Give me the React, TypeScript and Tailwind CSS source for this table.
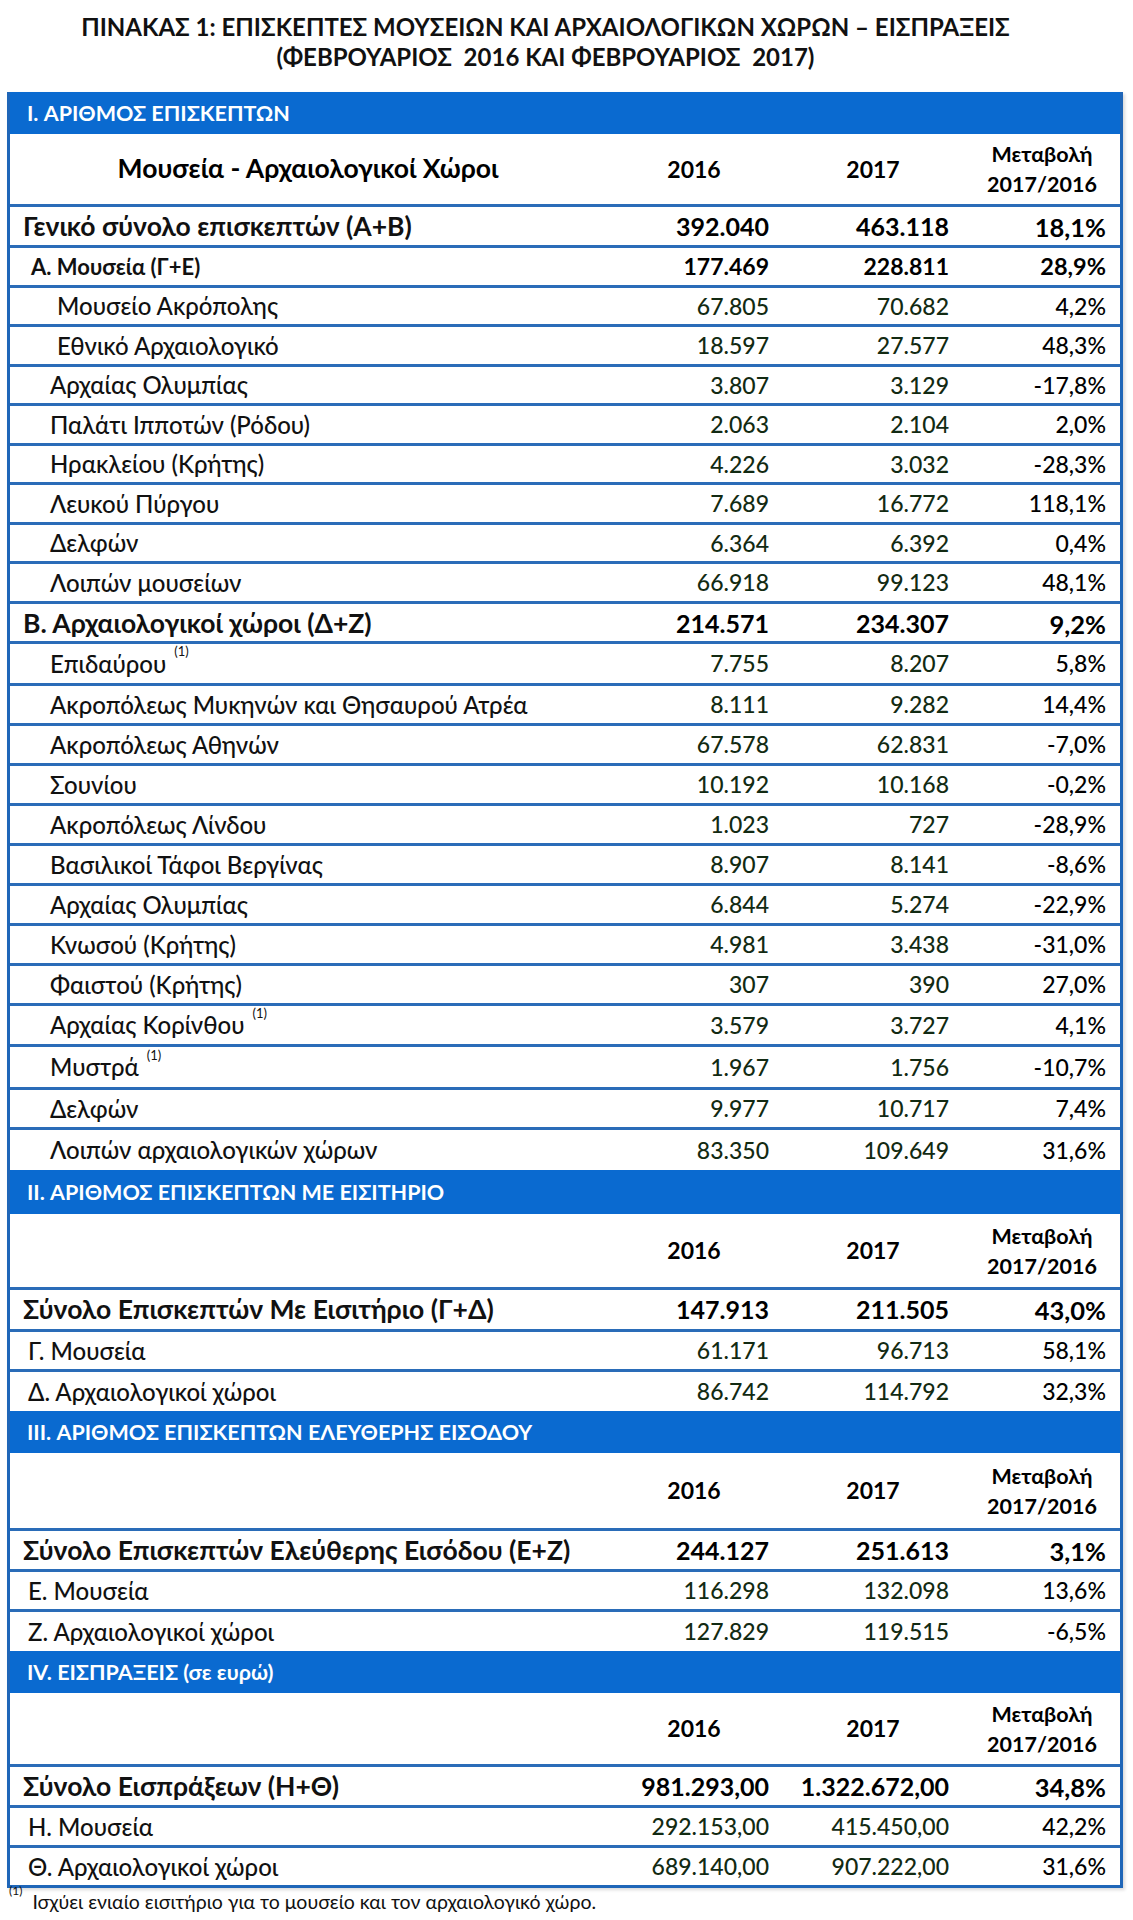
type Kind = "total" | "sub" | "item";

interface RowProps {
  label: string;
  v1: string;
  v2: string;
  pct: string;
  kind?: Kind;
  indent?: string;
  note?: boolean;
  h?: string;
}

const GRID = "grid grid-cols-[596px_176px_182px_156px]";

// one data row of the table
function Row({ label, v1, v2, pct, kind = "item", indent = "pl-[40px]", note, h = "h-[40px]" }: RowProps) {
  let labelSize = "text-[24px] font-medium";
  let numSize = "text-[23px] font-medium text-[#122a12]";
  let pctSize = "text-[23px] font-medium";
  if (kind === "total") {
    labelSize = "text-[26.5px] font-bold";
    numSize = "text-[25px] font-bold text-black";
    pctSize = "text-[25.5px] font-bold";
  } else if (kind === "sub") {
    labelSize = "text-[22px] font-bold";
    numSize = "text-[23px] font-bold text-black";
    pctSize = "text-[23.5px] font-bold";
  }
  return (
    <div className={`${GRID} ${h} items-center border-t-[3px] border-[#2a6cb8]`}>
      <div className={`${indent} ${labelSize} text-[#111] whitespace-nowrap`}>
        {label}
        {note && <sup className="ml-2 text-[13px] font-normal align-[10px]">(1)</sup>}
      </div>
      <div className={`text-right pr-[13px] ${numSize}`}>{v1}</div>
      <div className={`text-right pr-[15px] ${numSize}`}>{v2}</div>
      <div className={`text-right pr-[14px] text-black ${pctSize}`}>{pct}</div>
    </div>
  );
}

function Band({ title, h = "h-[42px]" }: { title: string; h?: string }) {
  return (
    <div className={`${h} bg-[#0a6ad0] flex items-center pl-[17px] text-white font-bold text-[21.5px]`}>
      {title}
    </div>
  );
}

function HeadRow({ label, h = "h-[75px]" }: { label?: string; h?: string }) {
  return (
    <div className={`${GRID} ${h} items-center font-bold text-black`}>
      <div className="text-center text-[26.5px]">{label}</div>
      <div className="text-center text-[23px]">2016</div>
      <div className="text-center text-[23px]">2017</div>
      <div className="text-center text-[21.5px] leading-[30px]">
        Μεταβολή
        <br />
        2017/2016
      </div>
    </div>
  );
}

export default function App() {
  return (
    <div className="w-[1133px] h-[1920px] bg-white font-['Lato','Open_Sans',sans-serif] overflow-hidden">
      {/* Title */}
      <div className="pt-[12px] pr-[42px] text-center font-bold text-[24px] leading-[30px] text-[#111]">
        <div>ΠΙΝΑΚΑΣ 1: ΕΠΙΣΚΕΠΤΕΣ ΜΟΥΣΕΙΩΝ ΚΑΙ ΑΡΧΑΙΟΛΟΓΙΚΩΝ ΧΩΡΩΝ – ΕΙΣΠΡΑΞΕΙΣ</div>
        <div className="whitespace-pre">(ΦΕΒΡΟΥΑΡΙΟΣ  2016 ΚΑΙ ΦΕΒΡΟΥΑΡΙΟΣ  2017)</div>
      </div>

      {/* Table */}
      <div className="mt-[20px] ml-[7px] w-[1116px] border-x-[3px] border-b-[3px] border-[#1f66b8] shadow-[2px_2px_3px_rgba(0,0,0,0.15)]">
        <Band title="I. ΑΡΙΘΜΟΣ ΕΠΙΣΚΕΠΤΩΝ" />
        <HeadRow label="Μουσεία - Αρχαιολογικοί Χώροι" h="h-[70px]" />
        <Row label="Γενικό σύνολο επισκεπτών (Α+Β)" v1="392.040" v2="463.118" pct="18,1%" kind="total" indent="pl-[13px]" h="h-[41px]" />
        <Row label="Α. Μουσεία (Γ+Ε)" v1="177.469" v2="228.811" pct="28,9%" kind="sub" indent="pl-[21px]" />
        <Row label="Μουσείο Ακρόπολης" v1="67.805" v2="70.682" pct="4,2%" indent="pl-[47px]" h="h-[39px]" />
        <Row label="Εθνικό Αρχαιολογικό" v1="18.597" v2="27.577" pct="48,3%" indent="pl-[47px]" />
        <Row label="Αρχαίας Ολυμπίας" v1="3.807" v2="3.129" pct="-17,8%" h="h-[39px]" />
        <Row label="Παλάτι Ιπποτών (Ρόδου)" v1="2.063" v2="2.104" pct="2,0%" />
        <Row label="Ηρακλείου (Κρήτης)" v1="4.226" v2="3.032" pct="-28,3%" h="h-[39px]" />
        <Row label="Λευκού Πύργου" v1="7.689" v2="16.772" pct="118,1%" />
        <Row label="Δελφών" v1="6.364" v2="6.392" pct="0,4%" h="h-[39px]" />
        <Row label="Λοιπών μουσείων" v1="66.918" v2="99.123" pct="48,1%" />
        <Row label="Β. Αρχαιολογικοί χώροι (Δ+Ζ)" v1="214.571" v2="234.307" pct="9,2%" kind="total" indent="pl-[13px]" />
        <Row label="Επιδαύρου" v1="7.755" v2="8.207" pct="5,8%" note h="h-[42px]" />
        <Row label="Ακροπόλεως Μυκηνών και Θησαυρού Ατρέα" v1="8.111" v2="9.282" pct="14,4%" />
        <Row label="Ακροπόλεως Αθηνών" v1="67.578" v2="62.831" pct="-7,0%" />
        <Row label="Σουνίου" v1="10.192" v2="10.168" pct="-0,2%" />
        <Row label="Ακροπόλεως Λίνδου" v1="1.023" v2="727" pct="-28,9%" />
        <Row label="Βασιλικοί Τάφοι Βεργίνας" v1="8.907" v2="8.141" pct="-8,6%" />
        <Row label="Αρχαίας Ολυμπίας" v1="6.844" v2="5.274" pct="-22,9%" />
        <Row label="Κνωσού (Κρήτης)" v1="4.981" v2="3.438" pct="-31,0%" />
        <Row label="Φαιστού (Κρήτης)" v1="307" v2="390" pct="27,0%" />
        <Row label="Αρχαίας Κορίνθου" v1="3.579" v2="3.727" pct="4,1%" note h="h-[41px]" />
        <Row label="Μυστρά" v1="1.967" v2="1.756" pct="-10,7%" note h="h-[43px]" />
        <Row label="Δελφών" v1="9.977" v2="10.717" pct="7,4%" />
        <Row label="Λοιπών αρχαιολογικών χώρων" v1="83.350" v2="109.649" pct="31,6%" h="h-[43px]" />

        <Band title="II. ΑΡΙΘΜΟΣ ΕΠΙΣΚΕΠΤΩΝ ΜΕ ΕΙΣΙΤΗΡΙΟ" h="h-[44px]" />
        <HeadRow h="h-[73px]" />
        <Row label="Σύνολο Επισκεπτών Με Εισιτήριο (Γ+Δ)" v1="147.913" v2="211.505" pct="43,0%" kind="total" indent="pl-[13px]" h="h-[42px]" />
        <Row label="Γ. Μουσεία" v1="61.171" v2="96.713" pct="58,1%" indent="pl-[18px]" />
        <Row label="Δ. Αρχαιολογικοί χώροι" v1="86.742" v2="114.792" pct="32,3%" indent="pl-[18px]" h="h-[42px]" />

        <Band title="III. ΑΡΙΘΜΟΣ ΕΠΙΣΚΕΠΤΩΝ ΕΛΕΥΘΕΡΗΣ ΕΙΣΟΔΟΥ" />
        <HeadRow />
        <Row label="Σύνολο Επισκεπτών Ελεύθερης Εισόδου (Ε+Ζ)" v1="244.127" v2="251.613" pct="3,1%" kind="total" indent="pl-[13px]" h="h-[41px]" />
        <Row label="Ε. Μουσεία" v1="116.298" v2="132.098" pct="13,6%" indent="pl-[18px]" />
        <Row label="Ζ. Αρχαιολογικοί χώροι" v1="127.829" v2="119.515" pct="-6,5%" indent="pl-[18px]" h="h-[42px]" />

        <Band title="IV. ΕΙΣΠΡΑΞΕΙΣ (σε ευρώ)" />
        <HeadRow h="h-[71px]" />
        <Row label="Σύνολο Εισπράξεων (Η+Θ)" v1="981.293,00" v2="1.322.672,00" pct="34,8%" kind="total" indent="pl-[13px]" h="h-[41px]" />
        <Row label="Η. Μουσεία" v1="292.153,00" v2="415.450,00" pct="42,2%" indent="pl-[18px]" />
        <Row label="Θ. Αρχαιολογικοί χώροι" v1="689.140,00" v2="907.222,00" pct="31,6%" indent="pl-[18px]" />
      </div>

      {/* Footnote */}
      <div className="ml-[9px] mt-[2px] text-[19.5px] text-[#111] leading-[24px]">
        <sup className="text-[12px] align-[8px] mr-[10px]">(1)</sup>
        Ισχύει ενιαίο εισιτήριο για το μουσείο και τον αρχαιολογικό χώρο.
      </div>
    </div>
  );
}
